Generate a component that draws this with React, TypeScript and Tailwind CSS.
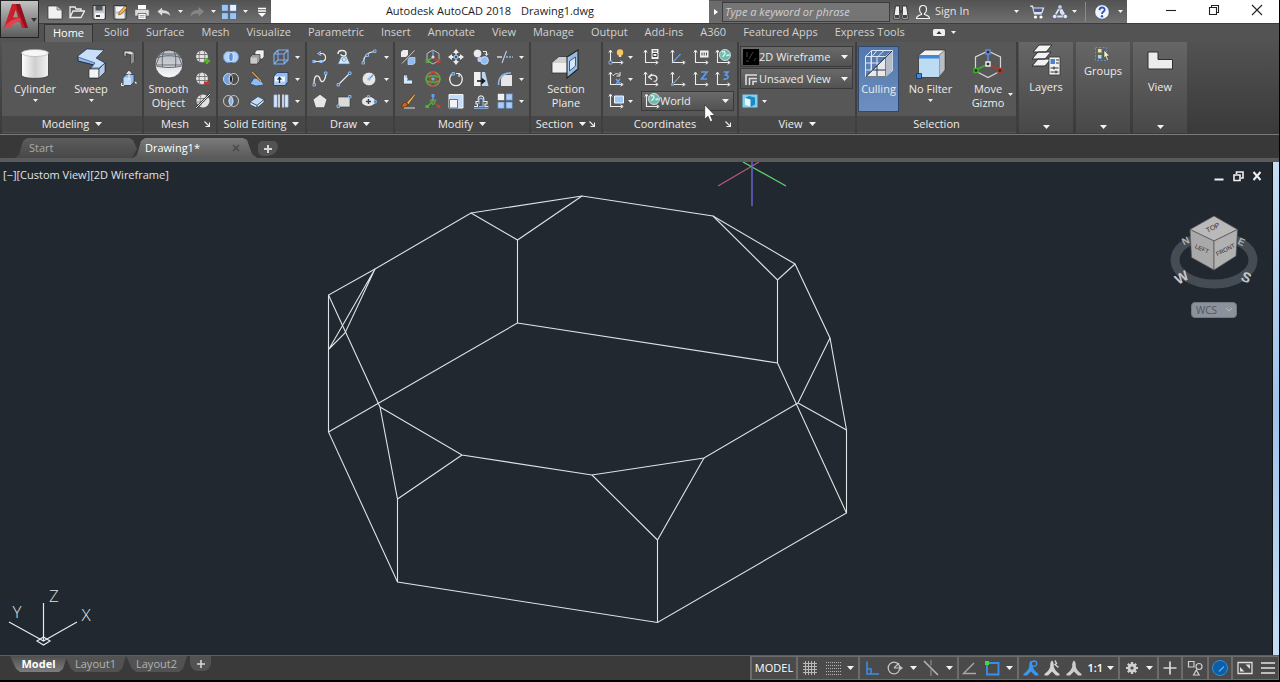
import React from "react";

type Kids = { children?: React.ReactNode };

const W = "#ececec";
const B = "#8fbcf2";
const L = "#c3dcf7";
const D = "#2c2c2c";

/* ---------- small 16px glyphs ---------- */

const sphere = (
  <>
    <circle cx="7" cy="7.500" r="6.300" fill="#e2e2e2" stroke="#3b3b3b" strokeWidth=".6" />
    <path d="M1.400 5.500h11.200M1.200 9.500h11.600M5 1.800C3.800 5 3.800 10 5 13.200M9 1.800c1.200 3.200 1.200 8.200 0 11.400" stroke="#666" strokeWidth=".8" fill="none" />
  </>
);
const axes = (
  <>
    <path d="M2.500 2v11.500H14" stroke={W} strokeWidth="1.100" fill="none" />
    <path d="M.8 3.600 2.500 1l1.700 2.600M12.600 11.800l2.600 1.700-2.600 1.700" stroke={W} strokeWidth="1" fill="none" />
  </>
);
const globe = (
  <>
    <circle cx="10" cy="6" r="5.500" fill="#6fb9ae" stroke="#e6f3ef" strokeWidth=".8" />
    <path d="M7 3c2-1 3 0 3 1.500S8 6 8 8M11.500 7c1-1 2.500-1 3-.5" stroke="#d9f5e6" strokeWidth="1.400" fill="none" />
  </>
);
const person = "M8 .5c1.800 1.700 2 4 1.700 6 1 3.500 2.800 5 5.800 7.500v1.500H12L8 11.500 4 15.500H.5V14c3-2.500 4.800-4 5.800-7.500C6 4.500 6.200 2.200 8 .5z";

const glyphs: Record<string, React.ReactNode> = {
  new: <><path d="M1 2h9l5 4v9H1z" fill="#f1f1f1" stroke="#333" strokeWidth=".7" /><path d="M10 2v4h5z" fill="#bdbdbd" stroke="#555" strokeWidth=".6" /></>,
  open: <path d="M1 13V3h5l1 2h5v2h3.500L12 13.500H1L4 7h8" fill="#5c5c5c" stroke={W} strokeWidth="1.300" />,
  save: <><path d="M2 1.500h12.500V15H2z" fill="#c3c7cc" stroke="#222" strokeWidth=".8" /><path d="M4.500 2h7v4.500h-7z" fill="#4f545b" /><path d="M4 9h9v6H4z" fill="#f3f3f3" /><path d="M5 11h4v2H5z" fill="#444" /></>,
  saveas: <><path d="M2 1.500h12V15H2z" fill="#b9bec4" stroke="#222" strokeWidth=".8" /><path d="M4 3h8v4.500H4z" fill="#f6f6f6" /><path d="M4 9.500h8v5H4z" fill="#eee" /><path d="m6.500 11 1-3L13 2l2 1.800L9.500 10z" fill="#efb44b" stroke="#6b4310" strokeWidth=".6" /></>,
  print: <><path d="M4 1h8v5H4z" fill="#fff" /><path d="M.8 5.500h14.400v6.500H.800z" fill="#dcdcdc" stroke="#444" strokeWidth=".5" /><path d="M4 9.500h8V15.500H4z" fill="#fff" stroke="#444" strokeWidth=".7" /><path d="M5.500 11.500h5M5.500 13.200h5" stroke="#888" strokeWidth=".8" /></>,
  undo: <path d="M1 7.500 6.500 3v3c5 0 8 2 8 7-1.500-2.800-4-3.500-8-3.500v3z" fill="#dadada" stroke="#444" strokeWidth=".5" />,
  redo: <path d="M15 7.500 9.500 3v3c-5 0-8 2-8 7 1.500-2.800 4-3.500 8-3.500v3z" fill="#868686" />,
  work: <><path d="M.5.500h6.800v6.800H.500zM8.700 8.700h6.800v6.800H8.700zM.5 8.700h6.800v6.800H.500z" fill="#9dc3ee" stroke="#31527a" strokeWidth=".6" /><path d="M8.700.500h6.800v6.800H8.700z" fill="#e9f2fc" stroke="#31527a" strokeWidth=".6" /></>,
  custom: <><path d="M4 4.500h8M4 7h8" stroke="#fff" strokeWidth="1.400" /><path d="M4 9h8l-4 4z" fill="#fff" /></>,
  bino: <><path d="M2.500 2h4v4l.5 9H.8L1.500 8zM9.500 2h4l1 6 .7 7H9L9.500 6z" fill="#eee" stroke="#222" strokeWidth=".8" /><path d="M6.500 6h3v3h-3zM2 11h4v3H2zM10 11h4v3h-4z" fill="#444" /></>,
  user: <path d="M8 1.500c2.200 0 3.500 1.700 3.500 3.700S10.300 9 9.500 9.500v1c2 .7 5 1.300 5 4h-13c0-2.700 3-3.300 5-4v-1C5.700 9 4.500 7.200 4.500 5.200S5.800 1.500 8 1.500z" fill="#555" stroke="#f4f4f4" strokeWidth="1.200" />,
  cart: <><path d="M1 2h2.500L5.500 10H13M4 4h10.500L13 8.500H5" fill="#cfd6ee" stroke="#dfe5f7" strokeWidth="1.200" /><path d="M4.500 4.500h9L12.500 8h-7z" fill="#4d5a86" /><circle cx="6.500" cy="13" r="1.600" fill="#fff" /><circle cx="12" cy="13" r="1.600" fill="#fff" /></>,
  a360: <><path d="M8 3 2.500 12.500h11zM8 3l1 6 4.500 3.500" fill="none" stroke="#dbe4f8" strokeWidth="1.800" /><circle cx="8" cy="3" r="2.300" fill="#c0cde8" stroke="#33415f" strokeWidth=".6" /><circle cx="2.700" cy="12.500" r="2.300" fill="#dbe4f8" stroke="#33415f" strokeWidth=".6" /><circle cx="13.300" cy="12.500" r="2.300" fill="#dbe4f8" stroke="#33415f" strokeWidth=".6" /></>,
  help: <><circle cx="8" cy="8" r="7.200" fill="#f2f5fb" stroke="#39496b" strokeWidth=".6" /><path d="M5.500 6.200c0-3.600 5.200-3.400 5.200-.5C10.700 7.500 8 7.600 8 10" stroke="#2b58b8" strokeWidth="1.800" fill="none" /><circle cx="8" cy="12.300" r="1.200" fill="#2b58b8" /></>,

  polysolid: <><path d="M3 2h7l3 2v9l-3 2V6L5 4.500V8L3 7z" fill="#dcdcdc" stroke="#333" strokeWidth=".8" /><path d="M10 5.500 13 4v9l-3 2z" fill="#8d8d8d" /></>,
  presspull: <><path d="m2.500 6 3-2.500H13V11l-3 3H2.500z" fill={B} stroke="#1c3350" strokeWidth=".7" /><path d="M2.500 6.500H10V14H2.500z" fill={L} /><path d="M8 9V1M5.800 3 8 .500 10.200 3M1 12l-1 2.500h3M14 11l1.500 1.500" stroke={W} strokeWidth="1.200" fill="none" /></>,
  meshmore: <>{sphere}<path d="M9 12h6M12 9v6" stroke="#57b02c" strokeWidth="2.400" /></>,
  meshless: <>{sphere}<path d="M9 12h6" stroke="#c8352d" strokeWidth="2.800" /></>,
  meshref: <><circle cx="8" cy="8" r="6.500" fill="#e2e2e2" /><path d="M2.500 5.500h7M2 9h5M6 2c-1 3-1 8 0 11" stroke="#777" strokeWidth=".8" fill="none" /><path d="M1 15 15 1" stroke="#333" strokeWidth="2.200" /><path d="M1 15 15 1" stroke="#ddd" strokeWidth="1" /></>,
  union: <><ellipse cx="5.300" cy="8" rx="4.800" ry="5.500" fill="#b5d2f6" stroke="#6d9fe0" strokeWidth=".9" /><ellipse cx="10.700" cy="8" rx="4.800" ry="5.500" fill="#b5d2f6" stroke="#6d9fe0" strokeWidth=".9" /><ellipse cx="8" cy="8" rx="2.300" ry="4.500" fill="#5d90d4" stroke="#f0f6fd" strokeWidth=".8" /></>,
  subtract: <><ellipse cx="5.300" cy="8" rx="4.800" ry="5.500" fill="#6f9fdd" stroke={L} /><ellipse cx="10.700" cy="8" rx="4.800" ry="5.500" fill="#4b4b4b" stroke="#cfcfcf" /><path d="M8 3.500c-2 2.500-2 6.500 0 9 2-2.500 2-6.500 0-9z" fill="#1c1c1c" stroke={W} strokeWidth=".7" /></>,
  intersect: <><ellipse cx="5.300" cy="8" rx="4.800" ry="5.500" fill="none" stroke="#c9c9c9" /><ellipse cx="10.700" cy="8" rx="4.800" ry="5.500" fill="none" stroke="#c9c9c9" /><path d="M8 3.500c-2.300 2.500-2.300 6.500 0 9 2.300-2.500 2.300-6.500 0-9z" fill="#7db4f0" stroke="#dcecfc" strokeWidth=".7" /></>,
  extrude: <><path d="M6 3 8 1h7v7l-2 2H6z" fill="#f0f0f0" stroke="#333" strokeWidth=".6" /><path d="m1 8 2.500-2.500H11V12l-3 3H1z" fill="#9c9c9c" stroke="#333" strokeWidth=".7" /><path d="M1.500 8.500H8v6H1.500z" fill="#c9c9c9" /></>,
  slice: <><path d="m1 13 4-6 6 1 4 6-8 1z" fill={B} stroke="#26405f" strokeWidth=".7" /><path d="m3 1 9 9" stroke="#3a2a1b" strokeWidth="2.400" /><path d="m3 1 9 9" stroke="#e2a15c" strokeWidth="1.300" /></>,
  thicken: <><path d="m1 9 8-5.500 6 3-7 6z" fill={L} stroke="#26405f" strokeWidth=".7" /><path d="m1 9 7 3.500V15L1 11.500zM8 12.500l7-6V9l-7 6z" fill="#e9eef5" stroke="#26405f" strokeWidth=".7" /></>,
  edges: <path d="M1 5h10v10H1zM5 1h10v10H5zM1 5l4-4M11 5l4-4M1 15l4-4M11 15l4-4" fill="none" stroke="#7eaef0" strokeWidth="1.100" />,
  faces: <><path d="m1 5 3-3.500h11v9l-3 4H1z" fill={B} stroke="#1f3553" strokeWidth=".8" /><path d="M1.500 5.500h10.500V14H1.500z" fill="#eef4fb" /><path d="M1.500 10.500h10.500V14H1.500z" fill="#a9cbf3" /><path d="M6.500 12V7M4.600 8.700l1.900-2.200 1.900 2.200" stroke="#1d2d44" strokeWidth="1.300" fill="none" /></>,
  separate: <><path d="M1 2h3v12H1zM12 2h3v12h-3z" fill="#d9e8fa" stroke="#9fc6f5" strokeWidth=".8" /><path d="M6 1.500v13M10 1.500v13" stroke="#f1f6fc" strokeWidth="1.500" /></>,

  pline: <><path d="M2 12.500h7c6 0 6-8 .5-8H8" stroke={W} strokeWidth="1.200" fill="none" /><path d="m9 2.500-3 2 3 2M1 11.500h2v2H1zM8 11.500h2v2H8z" stroke={B} strokeWidth="1.200" fill="none" /></>,
  region: <><path d="m5 8 5.500-1L14 15H2z" fill="#dcebfb" stroke="#49729f" strokeWidth=".7" /><path d="M2 5c0-5 8-4.500 8-.5S6 7 4.500 5.500M6 11c0-3 4-3 4-.5S7 13 6 11z" fill="none" stroke={W} strokeWidth="1.500" /><path d="M6 11c0-3 4-3 4-.5S7 13 6 11z" fill="none" stroke="#5b93d8" /></>,
  arc: <><path d="M2.500 13C3 7 7 3 13.500 2.500" stroke={W} strokeWidth="1.200" fill="none" /><path d="M1 12.500h2.500V15H1zM5 5h2.500v2.500H5zM12.500 1H15v2.500h-2.500z" stroke={B} fill="#4b6c96" strokeWidth=".9" /></>,
  spline: <><path d="M2 13C2 2 7 4 8 8s5 4 6-5.500" stroke={W} strokeWidth="1.300" fill="none" /><path d="M1 12.500h2.500V15H1zM12.500 1H15v2.500h-2.500z" stroke={B} fill="#4b6c96" strokeWidth=".9" /></>,
  line: <><path d="M2.500 13.500 13.500 2.500" stroke={W} strokeWidth="1.100" /><path d="M1 12.500h2.500V15H1zM12.500 1H15v2.500h-2.500z" stroke={B} fill="#4b6c96" strokeWidth=".9" /></>,
  circle: <><circle cx="8" cy="8" r="6.800" fill="#e6e6e6" stroke="#444" strokeWidth=".6" /><path d="m8 8 4-4" stroke="#5b93d8" strokeWidth="1.200" /><circle cx="8" cy="8" r="1.600" fill={B} /></>,
  polygon: <path d="m8 1.200 7 5.200-2.600 8.300H3.600L1 6.400z" fill="#e6e6e6" stroke="#3a3a3a" strokeWidth=".7" />,
  rect: <><path d="M2 4h12v10H2z" fill="#dadada" stroke="#333" strokeWidth=".6" /><path d="M1 12h2.500v2.500H1zM12.500 2.500H15V5h-2.500z" stroke={B} fill="#4b6c96" strokeWidth=".9" /></>,
  ellipse: <><ellipse cx="7.500" cy="8.500" rx="7" ry="5" fill="#e6e6e6" stroke="#333" strokeWidth=".6" /><path d="M7.500 6v5M5 8.500h5" stroke="#345" strokeWidth="1.400" /><path d="M13 7.500h2.300V10H13zM6.500 2.500h2v2h-2z" stroke={B} fill="#4b6c96" strokeWidth=".8" /></>,

  erase: <><path d="M1 3 3 1h5v5L6 8H1z" fill={W} /><path d="m8 10.500 1.500-2H15V14l-2 1.500H8z" fill={B} stroke={L} strokeWidth=".7" /><path d="M2 14.500 14.500 1.500" stroke="#c9c9c9" strokeWidth="1" /></>,
  gizmo: <><path d="M8 1 14 4.500v7L8 15 2 11.500v-7z" fill="none" stroke="#bdbdbd" /><path d="M8 8V2" stroke="#6c9be0" strokeWidth="1.400" /><path d="m8 8-5.500 4" stroke="#4db536" strokeWidth="1.400" /><path d="m8 8 5.500 4" stroke="#cf3d34" strokeWidth="1.400" /><path d="M1 10.500h3v3H1z" fill="none" stroke="#4db536" /><path d="M12 10.500h3v3h-3z" fill="none" stroke="#cf3d34" /><circle cx="8" cy="8" r="1.500" fill="#ddd" /></>,
  move: <><path d="m8 0 3 4H5zM8 16l3-4H5zM0 8l4-3v6zM16 8l-4-3v6z" fill={W} /><path d="M8 3v2.500M8 10.500V13M3 8h2.500M10.500 8H13" stroke={W} strokeWidth="1.800" /><path d="M6.500 6.500h3v3h-3z" fill="#31527a" stroke={B} /></>,
  copy: <><circle cx="4.500" cy="4.500" r="4.200" fill={W} stroke="#333" strokeWidth=".5" /><circle cx="7" cy="10.500" r="2.600" fill="#b9cfe9" /><circle cx="11.500" cy="11.500" r="3.900" fill={B} stroke={L} /><path d="M10 2.500h3.500V6M12 4.500l1.500 2 1.500-2" stroke={W} fill="none" /></>,
  trim: <><path d="M0 8h5" stroke={W} strokeWidth="1.300" /><path d="M9 8h7" stroke={B} strokeWidth="1.300" strokeDasharray="2 1" /><path d="M5 14 9.500 2" stroke="#b8cbe2" strokeWidth="1.200" /></>,
  align: <><path d="M3.500 4h4v5.500h5V13h-9z" fill="#dbe9f8" stroke="#333" strokeWidth=".6" /><path d="m4 4 3.500 3v2.500H12" stroke="#82aedc" fill="none" /></>,
  rot3d: <><circle cx="8" cy="8" r="7" fill="none" stroke="#8a8f5a" strokeWidth="1.400" /><ellipse cx="8" cy="8" rx="3.300" ry="7" fill="none" stroke="#c5453b" strokeWidth="1.500" /><ellipse cx="8" cy="8" rx="7" ry="3.300" fill="none" stroke="#4db536" strokeWidth="1.400" /><path d="M6.500 6.500h3v3h-3z" fill="#7aa7e4" /></>,
  rotate: <><path d="M5 2.500C-.5 6 1.500 14.700 8 14.700S16.500 6 11 2.500" stroke={W} strokeWidth="1.300" fill="none" /><path d="M8 2.500h3v3.500" stroke={W} strokeWidth="1.200" fill="none" /><path d="M4 1.500h2.500V4H4z" stroke={B} strokeWidth=".9" fill="#4b6c96" /></>,
  mirror: <><path d="M1 1h6.500v14H1z" fill="#f1f1f1" /><path d="M9 1h3l3.500 14H9z" fill="#b8d4f3" /><path d="M4 10h6M8.500 7.500l3 2.500-3 2.500" stroke="#111" strokeWidth="1.600" fill="none" /></>,
  fillet: <><path d="M4 15V9c0-3 2-5 5-5h6v11z" fill="#e6e6e6" /><path d="M1.500 14C1.500 6 5 2 14 2" stroke={B} strokeWidth="1.500" fill="none" /></>,
  explode: <><path d="m6.500 10 8-9 1 1-7 9.500z" fill="#f0b85a" stroke="#4b2c0b" strokeWidth=".6" /><path d="M1 14c1.500-1 1-4 4-5l3 2.500C6.500 14.500 3 14.500 1 14z" fill="#c9651d" stroke="#43200a" strokeWidth=".6" /><path d="M4 15h11" stroke="#ddd" /></>,
  scale3d: <><path d="M8 8V2" stroke="#6c9be0" strokeWidth="1.500" /><path d="m8 8.500-6 5" stroke="#4db536" strokeWidth="1.500" /><path d="m8 8.500 6 5" stroke="#cf3d34" strokeWidth="1.500" /><path d="M6.500 1h3v3h-3z" fill="#6c9be0" /><path d="M.5 12H4v3H.500z" fill="#4db536" /><path d="M12 12h3.500v3H12z" fill="#cf3d34" /><path d="m5 7 3 5 3-5z" fill="none" stroke="#5eb048" /></>,
  scale: <><path d="M1 1.500h14V15H1z" fill={L} stroke="#f2f6fb" strokeWidth="1" /><path d="M1.500 6.500h8V15h-8z" fill="#f3f3f3" stroke="#44699a" strokeWidth=".9" /></>,
  offset: <><path d="M1 13.500h3.500V11H3V8.500h2.500C3 1 13 1 10.500 8.500H14V11h-2v2.500h3.500" stroke={W} strokeWidth="1.100" fill="none" /><path d="M1 15.300h14.500M6 13.500h4V8c1-3.500-5-3.500-4 0v3" stroke={B} strokeWidth="1.100" fill="none" /></>,
  array: <><path d="M.8.800h6.400v6.400H.800z" fill="#f1f1f1" /><path d="M9 .800h6.400v6.400H9zM.8 9h6.400v6.400H.800zM9 9h6.400v6.400H9z" fill="#a9cbf5" stroke="#4b75a8" strokeWidth=".6" /></>,

  ucs: <>{axes}<circle cx="12" cy="3.500" r="3.200" fill="#f7c75b" /><path d="M10.800 6h2.400v2h-2.400z" fill="#ddd" /><path d="M1 12h3v3H1z" fill="#2d568e" stroke={B} strokeWidth=".8" /></>,
  named: <>{axes}<path d="M8.500 0h7v10h-7z" fill="#efefef" /><path d="M10 2h4M10 4.500h4v3h-4z" stroke="#333" strokeWidth="1" fill="none" /></>,
  ucsface: <>{axes}<path d="m3 13 7.500-8" stroke="#5f9be8" strokeWidth="1.300" /></>,
  ucsobj: <>{axes}<path d="M7 1.500h8.500v7H7z" fill="#f2f2f2" /><path d="M9 3.500v3M11.200 3.500v3M13.400 3.500v3" stroke="#444" strokeWidth="1" /></>,
  ucsworld: <>{axes}{globe}</>,
  ucsx: <>{axes}<path d="M5 5c2-3 5-3 6.500-1M12 1v4H8.500" stroke={W} fill="none" /><path d="m8 8 4 5M12 8l-4 5" stroke="#6ba3ec" strokeWidth="1.500" /></>,
  ucsprev: <>{axes}<path d="M6 6c3-3 8-2 8 1.500 0 2-1.500 3-3.500 3M9 3 5.500 6 9 8.500" stroke={W} strokeWidth="1.200" fill="none" /></>,
  ucsorig: <>{axes}<path d="m3 13 7-8" stroke="#a8b8cc" /><path d="M1 12h3v3H1z" fill="#5c98e2" /></>,
  ucsz: <>{axes}<path d="M8 1h6L8.500 8H14" stroke="#5f9be8" strokeWidth="1.700" fill="none" /></>,
  ucs3: <>{axes}<path d="M8.500 1h4.500l-2.500 3c4 0 3.500 5-2 4" stroke="#5f9be8" strokeWidth="1.700" fill="none" /></>,
  ucsview: <>{axes}<path d="M6.500 3h9v7h-9z" fill="#9cc6f5" stroke="#eef5fd" /></>,
  cubeview: <><path d="M.5 1.500h15v13H.500z" fill="#7ed0f2" /><path d="m3 5 4-2 6 1.500v7L8.500 14 3 12z" fill="#1f88c4" /><path d="m3 5 5.500 1.500V14L3 12z" fill="#e9f7fd" /></>,

  ortho: <path d="M3 1.500V14h12M3 9h4v5" stroke="#3b8fe8" strokeWidth="1.500" fill="none" />,
  polar: <><circle cx="7" cy="8" r="5.800" fill="none" stroke="#c4c4c4" strokeWidth="1.300" /><path d="M7 8h8M7 8l5-5M13 6.500 15 8l-2 1.500" stroke="#c4c4c4" strokeWidth="1.200" fill="none" /></>,
  iso: <><path d="M1 1 15 15" stroke="#b9b9b9" strokeWidth="1.500" /><path d="M8 0v5.500M8 9.500V16" stroke="#8b8b8b" strokeWidth="1.200" /></>,
  angle: <path d="M13 3 2.500 13.500H15" stroke="#a9a9a9" strokeWidth="1.400" fill="none" />,
  osnap: <><path d="M3 3h11.500v11.500H3z" fill="none" stroke="#3b8fe8" strokeWidth="1.800" /><path d="M1 1h4v4H1z" fill="#38e038" /></>,
  grid: <path d="M3.500 1v14M6.500 1v14M9.500 1v14M12.500 1v14M1 3.500h14M1 6.500h14M1 9.500h14M1 12.500h14" stroke="#b9b9b9" strokeWidth="1" />,
  dots: <path d="M1 2.500h15M1 5.500h15M1 8.500h15M1 11.500h15M1 14.500h15" stroke="#b5b5b5" strokeWidth="1" strokeDasharray="1 1" />,
  anno: <><path d={person} fill="#3b96f0" /><circle cx="11" cy="3.700" r="2.700" fill="#4a4a4a" stroke="#3b96f0" strokeWidth="1.400" /></>,
  anno2: <><path d={person} fill="#d4d4d4" /><path d="m11 .500 1.500 3L11 4.500l3.500 3" stroke="#d4d4d4" strokeWidth="1.400" fill="none" /></>,
  anno3: <path d={person} fill="#cccccc" />,
  gear: <><circle cx="8" cy="8" r="4.500" fill="#d0d0d0" /><path d="M8 2v12M2 8h12M3.800 3.800l8.400 8.400M12.200 3.800l-8.400 8.400" stroke="#d0d0d0" strokeWidth="2.200" /><circle cx="8" cy="8" r="1.600" fill="#4a4a4a" /></>,
  plus: <path d="M8 1.500v13M1.500 8h13" stroke="#d8d8d8" strokeWidth="1.700" />,
  shapes: <><path d="M1.500 1.500h5.500V7H1.500zM6.500 15l2.800-5 2.800 5z" fill="none" stroke="#cfcfcf" strokeWidth="1.200" /><circle cx="12" cy="6.500" r="3" fill="none" stroke="#cfcfcf" strokeWidth="1.200" /></>,
  hw: <><circle cx="8" cy="8" r="7.500" fill="#0d5ea8" stroke="#2f8ee0" strokeWidth="1" /><path d="m7 11.500 5-5" stroke="#59aef2" strokeWidth="1.300" /></>,
  clean: <><path d="M1 2.500h14v11H1z" fill="none" stroke="#dedede" strokeWidth="1.300" /><path d="M8.500 4.500H13V9zM3 7v4.500h4.500z" fill="#dedede" /></>,
  burger: <path d="M1 3h14M1 8h14M1 13h14" stroke="#e2e2e2" strokeWidth="1.600" />,
};

const Glyph = ({ name }: { name: string }) => (
  <svg viewBox="0 0 16 16" className="h-4 w-4 shrink-0" aria-hidden="true">{glyphs[name]}</svg>
);

const Tri = () => (
  <svg viewBox="0 0 5 3" className="h-[3px] w-[5px] shrink-0" aria-hidden="true"><path d="M0 0h5L2.500 3z" fill="#f0f0f0" /></svg>
);
const BigTri = () => (
  <svg viewBox="0 0 7 4" className="h-1 w-[7px] shrink-0" aria-hidden="true"><path d="M0 0h7L3.500 4z" fill="#f4f4f4" /></svg>
);

const IconBtn = ({ name }: { name: string }) => (
  <button aria-label={name} className="flex h-[22px] items-center justify-center">
    <Glyph name={name} />
  </button>
);
const MoreBtn = () => (
  <button aria-label="More" className="flex h-[22px] items-center justify-center"><Tri /></button>
);
const ToolGrid = ({ rows, cols }: { rows: string[]; cols: string }) => (
  <div className={`grid content-start pt-1 ${cols}`}>
    {rows.map((n, i) => (n === "v" ? <MoreBtn key={i} /> : <IconBtn key={i} name={n} />))}
  </div>
);

/* ---------- 32px drawings ---------- */

const big: Record<string, React.ReactNode> = {
  cylinder: <><path d="M2.500 5v22c0 4.500 27 4.500 27 0V5z" fill="url(#cyl)" stroke="#333" strokeWidth=".8" /><ellipse cx="16" cy="5" rx="13.500" ry="3.500" fill="#f7f7f7" stroke="#aaa" strokeWidth=".6" /></>,
  sweep: <><path d="m3 8 9-7 17 1-8 8 9 5v9l-6 6h-9v-9l4-4L3 13z" fill="#8db7ea" stroke="#1d2c40" /><path d="m3 8 9-7 17 1-8 8 9 5-6 5h-8l4-5L3 9z" fill="#c9def7" stroke="#2d486b" strokeWidth=".7" /><path d="M14 21h10v9H14z" fill="#f3f3f3" stroke="#333" strokeWidth=".7" /><path d="m24 21 6-6v9l-6 6z" fill="#b5cdea" stroke="#333" strokeWidth=".7" /></>,
  smooth: <><circle cx="16" cy="16" r="14" fill="url(#ball)" stroke="#333" strokeWidth=".8" /><path d="M7 6h18l4 11H3zM3 10c8-3 18-3 26 0M3.500 18c8 2 17 2 25 0M11 3c-2 4-2 9-1.500 16M21 3c2 4 2 9 1.500 16" fill="#9aa3ae" fillOpacity=".25" stroke="#5c6167" strokeWidth=".9" /></>,
  section: <><path d="m2 15 7-6h11v15l-2 1H2z" fill="#f0f0f0" stroke="#333" strokeWidth=".8" /><path d="m2 15 7-6h11l-4 6z" fill="#d0d0d0" /><path d="M17 9 28 2v19l-11 9z" fill="#9fc5f1" fillOpacity=".9" stroke="#222" strokeWidth="1.100" /><path d="m19.500 13 6-4v9l-6 5z" fill="#d4e6fa" stroke="#335c92" /></>,
  culling: <><path d="M2.500 8.500h20v20h-20zM8 8.500v20M14 8.500v20M2.500 15h20M2.500 22h20M8.500 2.500h21v20M2.500 8.500l6-6M22.500 8.500l7-6M22.500 28.500l7-6M14 2.500l-5 6M21 2.500l-6 6M8.500 2.500v20h21" fill="none" stroke="#dbe7f6" strokeWidth="1" /><path d="M3 28.500 22.500 9v19.500z" fill="#e9e9e9" stroke="#333" strokeWidth=".6" /><path d="M23 9l6.500-6v19L23 28.500z" fill="#b3bcc8" /><path d="M3 28.500 29 3M14 18v10M10 22h12.500" stroke="#24364e" strokeWidth="1" fill="none" /></>,
  nofilter: <><path d="m4 7 6-5h20v20l-6 7H4z" fill="#f2f2f2" stroke="#333" strokeWidth=".8" /><path d="m24 7 6-5v20l-6 7z" fill="#b9bec4" stroke="#444" strokeWidth=".6" /><path d="M4 7h20v22H4z" fill="#bcdcf4" /><path d="M4 7h20v3.500H4z" fill="#3f86dd" /><path d="M1.500 25.500h5v5h-5z" fill="#3f86dd" stroke="#12315c" strokeWidth=".8" /></>,
  movegizmo: <><path d="M16 3 28.500 9v14L16 29.500 3.500 23V9z" fill="none" stroke="#d6d6d6" strokeWidth="1.200" /><path d="M16 16V5" stroke="#5e8fdc" strokeWidth="1.600" /><path d="M16 16 4 22" stroke="#3fae2d" strokeWidth="1.600" /><path d="m16 16 12 6" stroke="#a93a31" strokeWidth="1.600" /><path d="M14 2h4v4h-4z" fill={D} stroke="#5e8fdc" strokeWidth="1.400" /><path d="M2 20.500h4v4H2z" fill={D} stroke="#3fae2d" strokeWidth="1.400" /><path d="M26 20.500h4v4h-4z" fill={D} stroke="#a93a31" strokeWidth="1.400" /><path d="M14 14h4v4h-4z" fill={D} stroke="#eee" strokeWidth="1.400" /></>,
  layers: <><path d="m2 22 6-7h13l-6 7zM2 15l6-7h13l-6 7zM3 8l6-7h13l-6 7z" fill="#f3f3f3" stroke="#2e2e2e" /><path d="M19 13h11v18H19z" fill="#f0f0f0" stroke="#333" strokeWidth=".8" /><path d="M20.500 15h4.500v5h-4.500z" fill="#4c83cc" /><path d="M26 16h3M26 19h3M20.500 24h8M20.500 28h8M24 22.500v3M26 26.500v3" stroke="#333" strokeWidth="1.100" /></>,
  viewp: <path d="M4 8h10v7.500h14.500V25H4z" fill="#ececec" stroke="#2e2e2e" strokeWidth="1" />,
};
const Big = ({ name }: { name: string }) => (
  <svg viewBox="0 0 32 32" className="h-8 w-8 shrink-0" aria-hidden="true">
    <defs>
      <linearGradient id="cyl"><stop offset="0" stopColor="#fff" /><stop offset=".5" stopColor="#cfcfcf" /><stop offset="1" stopColor="#f2f2f2" /></linearGradient>
      <linearGradient id="ball" x2="0" y2="1"><stop offset="0" stopColor="#b9bec5" /><stop offset="1" stopColor="#fafafa" /></linearGradient>
    </defs>
    {big[name]}
  </svg>
);

const BigBtn = ({ icon, label, second, arrow, className = "" }: { icon: string; label: string; second?: string; arrow?: boolean; className?: string }) => (
  <button className={`flex shrink-0 flex-col items-center whitespace-nowrap leading-[14px] ${className}`}>
    <Big name={icon} />
    <span className="mt-0.5">{label}</span>
    {second && <span>{second}</span>}
    {arrow && <span className="mt-[3px] flex"><Tri /></span>}
  </button>
);

const Panel = ({ title, className, arrow, corner, children }: Kids & { title: string; className: string; arrow?: boolean; corner?: boolean }) => (
  <section className={`flex shrink-0 flex-col border-r-2 border-[#3f3f3f] bg-[#575757] ${className}`}>
    <div className="h-[74px]">{children}</div>
    <div className="flex h-4 items-center bg-[#474747] px-0.5">
      <span className="flex flex-1 items-center justify-center gap-1.5 whitespace-nowrap">
        {title}
        {arrow && <BigTri />}
      </span>
      {corner && (
        <svg viewBox="0 0 6 6" className="mr-1 h-1.5 w-1.5 shrink-0" aria-hidden="true"><path d="M.5.500 5 5M5.500 1.500v4h-4" stroke="#eee" strokeWidth="1.100" fill="none" /></svg>
      )}
    </div>
  </section>
);

const Collapsed = ({ label, children }: Kids & { label: string }) => (
  <button className="mr-[3px] flex w-[54px] shrink-0 flex-col items-center justify-between bg-gradient-to-b from-[#666] to-[#484848] pb-1">
    <span className="flex flex-col items-center">{children}<span className="leading-[14px]">{label}</span></span>
    <BigTri />
  </button>
);

const Combo = ({ icon, value, label, className }: { icon: React.ReactNode; value: string; label: string; className: string }) => (
  <label className={`flex items-center border border-[#3a3a3a] bg-gradient-to-b from-[#6a6a6a] to-[#525252] pl-0.5 pr-1 ${className}`}>
    {icon}
    <select aria-label={label} className="min-w-0 flex-1 appearance-none bg-transparent leading-4 outline-none">
      <option>{value}</option>
    </select>
    <BigTri />
  </label>
);

const ribbonTabs = ["Solid", "Surface", "Mesh", "Visualize", "Parametric", "Insert", "Annotate", "View", "Manage", "Output", "Add-ins", "A360", "Featured Apps", "Express Tools"];

const Header = () => (
  <header className="flex h-[42px] bg-[#535353]">
    <button aria-label="Application menu" className="flex h-[38px] w-[39px] shrink-0 items-start gap-[3px] border border-[#222] bg-gradient-to-b from-[#c4c4c4] to-[#5c5c5c] pl-[3px] pt-px">
      <svg viewBox="0 0 24 28" className="h-7 w-6 shrink-0" aria-hidden="true">
        <path d="M0 26 8 2h8l8 24h-6l-2-6H8l-2 6zM9 15.500h5L11.800 8z" fill="#c8202c" />
        <path d="M12 2h4l8 24h-3L13 7z" fill="#8e1420" />
        <path d="M0 26c3-6 8-9 16-10l1 3.500c-6 0-9 2.500-11 6.500z" fill="#e4414a" />
      </svg>
      <span className="mt-4 flex"><svg viewBox="0 0 6 4" className="h-1 w-1.5"><path d="M0 0h6L3 4z" fill="#333" /></svg></span>
    </button>
    <div className="flex min-w-0 flex-1 flex-col">
      <div className="flex h-[23px]">
        <div className="flex w-[232px] shrink-0 items-center justify-between bg-gradient-to-b from-[#525252] to-[#707070] pl-2 pr-px">
          {["new", "open", "save", "saveas", "print", "undo"].map((n) => (
            <button key={n} aria-label={n}><Glyph name={n} /></button>
          ))}
          <Tri />
          <button aria-label="redo"><Glyph name="redo" /></button>
          <Tri />
          <button aria-label="workspace"><Glyph name="work" /></button>
          <Tri />
          <button aria-label="customize"><Glyph name="custom" /></button>
        </div>
        <h1 className="flex min-w-0 flex-1 items-center justify-center gap-2.5 whitespace-nowrap bg-white text-[11px] text-[#1c1c1c]">
          <span>Autodesk AutoCAD 2018</span>
          <span>Drawing1.dwg</span>
        </h1>
        <div className="flex w-[418px] shrink-0 items-center bg-gradient-to-b from-[#525252] to-[#707070]">
          <button aria-label="Toggle search" className="flex h-[21px] w-[13px] items-center justify-center bg-[#6b6b6b]">
            <svg viewBox="0 0 4 6" className="h-1.5 w-1"><path d="M0 0v6l4-3z" fill="#fff" /></svg>
          </button>
          <input aria-label="Search" placeholder="Type a keyword or phrase" className="h-5 w-[168px] border border-[#3c3c3c] bg-[#757575] px-0.5 italic text-white outline-none placeholder:text-[#d0d0d0]" />
          <button aria-label="Find" className="ml-[3px]"><Glyph name="bino" /></button>
          <button className="ml-1.5 flex flex-1 items-center gap-1 text-[#e4e4e4]"><Glyph name="user" />Sign In</button>
          <Tri />
          <button aria-label="Store" className="ml-2.5"><Glyph name="cart" /></button>
          <button aria-label="Autodesk A360" className="ml-[7px] flex items-center gap-1"><Glyph name="a360" /><Tri /></button>
          <span className="ml-2 h-5 w-px bg-[#8a8a8a]" />
          <button aria-label="Help" className="ml-2 mr-1 flex items-center gap-2"><Glyph name="help" /><Tri /></button>
        </div>
        <div className="grid w-[152px] shrink-0 grid-cols-3 bg-white pl-[22px]">
          {["M3 8.500h10", "M3.500 5.500h7v7h-7zM5.500 5.500v-2h7v7h-2", "m3 3 10 10M13 3 3 13"].map((d, i) => (
            <button key={d} aria-label={["Minimize", "Restore", "Close"][i]} className="flex items-center justify-center pb-1">
              <svg viewBox="0 0 16 16" className="h-4 w-4"><path d={d} fill="none" stroke="#222" strokeWidth="1.100" /></svg>
            </button>
          ))}
        </div>
      </div>
      <nav className="flex h-[19px] items-center border-t border-[#3d3d3d] bg-[#535353] pb-px pl-[5px] text-[#d2d2d2]">
        <button className="mr-0.5 h-[18px] w-[49px] border border-b-0 border-[#333] bg-[#646464] text-white">Home</button>
        {ribbonTabs.map((t) => (
          <button key={t} className="whitespace-nowrap pl-[9px] pr-2">{t}</button>
        ))}
        <button aria-label="Minimize ribbon" className="ml-5 flex items-center gap-1.5">
          <svg viewBox="0 0 12 7" className="h-[7px] w-3"><rect width="12" height="7" rx="1.500" fill="#eee" /><path d="m3.500 5 2.500-3 2.500 3z" fill="#333" /></svg>
          <Tri />
        </button>
      </nav>
    </div>
  </header>
);

const Ribbon = () => (
  <div className="relative flex h-[93px] border-b border-[#7a7a7a] bg-gradient-to-b from-[#525252] to-[#3a3a3a] pb-px pl-0.5 text-[#ececec]">
    <Panel title="Modeling" arrow className="w-[142px]">
      <div className="flex">
        <BigBtn icon="cylinder" label="Cylinder" arrow className="w-[66px] pt-1.5" />
        <BigBtn icon="sweep" label="Sweep" arrow className="w-[46px] pt-1.5" />
        <ToolGrid cols="grid-cols-[22px] pl-1" rows={["polysolid", "presspull"]} />
      </div>
    </Panel>
    <Panel title="Mesh" corner className="w-[74px]">
      <div className="flex">
        <BigBtn icon="smooth" label="Smooth" second="Object" className="w-[49px] pt-1.5" />
        <ToolGrid cols="grid-cols-[20px]" rows={["meshmore", "meshless", "meshref"]} />
      </div>
    </Panel>
    <Panel title="Solid Editing" arrow className="w-[89px]">
      <ToolGrid cols="grid-cols-[26px_26px_22px_10px]" rows={["union", "extrude", "edges", "v", "subtract", "slice", "faces", "v", "intersect", "thicken", "separate", "v"]} />
    </Panel>
    <Panel title="Draw" arrow className="w-[88px]">
      <ToolGrid cols="grid-cols-[26px_22px_28px_6px]" rows={["pline", "region", "arc", "v", "spline", "line", "circle", "v", "polygon", "rect", "ellipse", "v"]} />
    </Panel>
    <Panel title="Modify" arrow className="w-[136px]">
      <ToolGrid
        cols="grid-cols-[26px_24px_22px_28px_20px_12px]"
        rows={["erase", "gizmo", "move", "copy", "trim", "v", "align", "rot3d", "rotate", "mirror", "fillet", "v", "explode", "scale3d", "scale", "offset", "array", "v"]}
      />
    </Panel>
    <Panel title="Section" arrow corner className="w-[72px]">
      <BigBtn icon="section" label="Section" second="Plane" className="w-full pt-1.5" />
    </Panel>
    <Panel title="Coordinates" corner className="w-[136px]">
      <div className="grid grid-cols-[25px_5px_36px_18px_27px_18px] pt-1">
        {["ucs", "v", "named", "ucsface", "ucsobj", "ucsworld", "ucsx", "v", "ucsprev", "ucsorig", "ucsz", "ucs3", "ucsview", "v"].map((n, i) =>
          n === "v" ? <MoreBtn key={i} /> : <IconBtn key={i} name={n} />,
        )}
        <Combo className="col-span-4 -mr-0.5 ml-2 h-5 self-center" label="UCS" value="World" icon={<Glyph name="ucsworld" />} />
      </div>
    </Panel>
    <Panel title="View" arrow className="w-[118px]">
      <div className="flex flex-col gap-px pl-px pr-0.5 pt-1">
        <Combo className="h-[21px]" label="Visual style" value="2D Wireframe" icon={<svg viewBox="0 0 16 16" className="h-4 w-4"><path d="M0 0h16v16H0z" fill="#000" /><path d="M4 3v5M6 10l4-7M11 12l2-3M3 12h3" stroke="#555" strokeWidth=".8" /></svg>} />
        <Combo className="h-[21px]" label="Named view" value="Unsaved View" icon={<svg viewBox="0 0 16 16" className="h-4 w-4"><path d="M3 14V4h11M6.500 14V7.500h7.500M10 14v-3.500h4" stroke="#ddd" strokeWidth="1.600" fill="none" /></svg>} />
        <button aria-label="Viewports" className="flex h-[22px] items-center gap-1 self-start pl-0.5"><Glyph name="cubeview" /><Tri /></button>
      </div>
    </Panel>
    <Panel title="Selection" className="w-[161px]">
      <div className="flex pl-px pt-1">
        <BigBtn icon="culling" label="Culling" className="h-[66px] w-[41px] border border-[#30486b] bg-gradient-to-b from-[#5478ad] to-[#6d8fc0] pt-px" />
        <BigBtn icon="nofilter" label="No Filter" arrow className="w-[63px] pt-0.5" />
        <BigBtn icon="movegizmo" label="Move" second="Gizmo" className="w-[52px] pt-0.5" />
        <span className="-ml-1.5 self-end pb-4"><Tri /></span>
      </div>
    </Panel>
    <div className="flex min-w-0 flex-1 pl-px">
      <Collapsed label="Layers"><span className="pb-1 pt-0.5"><Big name="layers" /></span></Collapsed>
      <Collapsed label="Groups">
        <svg viewBox="0 0 16 16" className="mb-0.5 mt-1 h-4 w-4" aria-hidden="true">
          <path d="M.5 1.500h11v13H.500z" fill="none" stroke="#5c8fd0" strokeDasharray="2 1.500" /><path d="M3 3h3.500v3.500H3z" fill="#e6e68c" /><path d="M3 9h3.500v3.500H3z" fill="#a8d8f0" /><path d="m9 4 5.500 6h-2.500l1.500 4-1.500.500-1.500-4L9 12z" fill="#f4f4c0" stroke="#333" strokeWidth=".5" />
        </svg>
      </Collapsed>
      <Collapsed label="View"><span className="pb-1 pt-0.5"><Big name="viewp" /></span></Collapsed>
    </div>
    <svg viewBox="0 0 12 19" className="absolute left-[704px] top-[62px] h-[19px] w-3" aria-hidden="true">
      <path d="M.7.800v14.500l3.300-3 2.300 5.500 2.400-1L6.500 11.500H11z" fill="#fff" stroke="#333" strokeWidth=".8" />
    </svg>
  </div>
);

const DocTabs = () => (
  <div className="flex h-[27px] items-end border-b-4 border-[#5a5a5a] bg-[#383838] pl-[15px]">
    <button className="h-5 w-[122px] bg-gradient-to-b from-[#5c5c5c] to-[#484848] pl-[14px] text-left text-[#a9a9a9] [clip-path:polygon(0_100%,4px_85%,8px_15%,12px_0,114px_0,118px_10%,122px_55%,117px_100%)]">Start</button>
    <button className="-ml-1 flex h-5 w-[124px] items-center justify-between bg-gradient-to-b from-[#7b7b7b] to-[#5a5a5a] pl-3 pr-[17px] text-white [clip-path:polygon(0_100%,4px_85%,8px_15%,12px_0,110px_0,114px_10%,119px_80%,124px_100%)]">
      Drawing1*
      <svg viewBox="0 0 8 8" className="h-2 w-2"><path d="m1 1 6 6M7 1 1 7" stroke="#4a4a4a" strokeWidth="1.600" /></svg>
    </button>
    <button aria-label="New drawing" className="ml-px mb-0.5 flex h-[15px] w-5 items-center justify-center rounded-md rounded-br-xl bg-[#525252]">
      <svg viewBox="0 0 8 8" className="h-2 w-2"><path d="M4 0v8M0 4h8" stroke="#d6d6d6" strokeWidth="2" /></svg>
    </button>
  </div>
);

const edges = [
  "M471 213 582 196 713 216 795 264 830 338 846.500 430V513L657.500 622.500 397.500 582 328.500 432V295L375 269z",
  "M471 213 517.500 240 582 196M517.500 240V323L328.500 432M517.500 323 777.500 363 846.500 513M713 216 777.500 280 795 264M777.500 280V363",
  "M830 338 798 403 846.500 430M798 403 704 458 592 475 462 455 380 407M328.500 295 380 407 397.500 499 462 455M397.500 499V582",
  "M592 475 657.500 540 704 458M657.500 540V622M375 269 329 349 345 333z",
];

const Viewport = () => (
  <main className="flex min-h-0 flex-1 bg-[#212830]">
    <div className="relative min-w-0 flex-1 overflow-hidden">
      <svg viewBox="0 162 1272 493" className="h-full w-full" aria-label="Model">
        <g fill="none" stroke="#dfe3e6" strokeWidth="1.100">{edges.map((d) => <path key={d} d={d} />)}</g>
        <path d="m718 186 41-24" stroke="#b4577a" strokeWidth="1.300" />
        <path d="m743 162 43 24" stroke="#5fd068" strokeWidth="1.300" />
        <path d="M752 162v44" stroke="#6361c4" strokeWidth="1.600" />
      </svg>
      <div className="absolute left-[3px] top-[5px] whitespace-nowrap leading-4 text-[#e4e4e4]">[−][Custom View][2D Wireframe]</div>
      <div className="absolute right-[9px] top-2 flex gap-[7px]">
        {["M1.500 9.500h9", "M2 5h6v5.500H2zM4.500 4V2H11v6H9", "m2.500 2 7 8M9.500 2l-7 8"].map((d, i) => (
          <button key={d} aria-label={["Minimize view", "Restore view", "Close view"][i]}>
            <svg viewBox="0 0 12 12" className="h-3 w-3"><path d={d} fill="none" stroke="#f0f0f0" strokeWidth={i === 1 ? 1.6 : 2} /></svg>
          </button>
        ))}
      </div>
      <div className="absolute right-[13px] top-[52px] flex w-[90px] flex-col items-center">
        <svg viewBox="0 0 90 80" className="h-20 w-[90px]" aria-label="View cube" fontFamily="Liberation Sans, sans-serif" fontWeight="700" textAnchor="middle">
          <ellipse cx="45" cy="46" rx="39" ry="24" fill="none" stroke="#454c54" strokeWidth="9" />
          <g fill="#a9adb1">
            <text x="18" y="30" fontSize="10" transform="rotate(-25 18 30)">N</text>
            <text x="71" y="31" fontSize="10" transform="rotate(25 71 31)">E</text>
            <text x="14" y="68" fontSize="14" fill="#c5c8cb" transform="rotate(-30 14 66)">W</text>
            <text x="76" y="68" fontSize="14" fill="#c5c8cb" transform="rotate(25 76 66)">S</text>
          </g>
          <path d="m45 2 23.500 13.500L45 27 21 15.500z" fill="#b9b9b9" stroke="#555" strokeWidth=".7" />
          <path d="m21 15.500 24 11.500v29L22.500 43.500z" fill="#a9a9a9" stroke="#555" strokeWidth=".7" />
          <path d="m45 27 23.500-11.500L67 42 45 56z" fill="#b1b1b1" stroke="#555" strokeWidth=".7" />
          <g fill="#2f2f2f" fontSize="7" fontWeight="400">
            <text x="44" y="16" transform="rotate(-26 44 14)">TOP</text>
            <text x="33" y="37" transform="rotate(24 33 35)" fontSize="6">LEFT</text>
            <text x="56.500" y="38" transform="rotate(-27 56 36)" fontSize="6">FRONT</text>
          </g>
        </svg>
        <button className="mt-2 flex h-4 w-[46px] items-center justify-between rounded border border-[#717880] bg-[#8c929b] px-1 text-[10px] text-[#50565f]">
          WCS
          <svg viewBox="0 0 6 4" className="h-1 w-1.5"><path d="m0 0 3 3 3-3" stroke="#b5bac1" fill="none" /></svg>
        </button>
      </div>
      <svg viewBox="0 0 96 70" className="absolute bottom-0 left-1 h-[70px] w-24" aria-label="UCS icon" fontFamily="Open Sans, sans-serif" fontWeight="300" fontSize="17" fill="#dfe3e6" textAnchor="middle">
        <path d="M39.500 18v38L73 37M39.500 56 5 37" stroke="#e6e9ec" strokeWidth="1.200" fill="none" />
        <path d="m33 56 6.500-4 6.500 4-6.500 4z" fill="none" stroke="#e6e9ec" strokeWidth="1.200" />
        <text x="13" y="33">Y</text>
        <text x="50" y="17">Z</text>
        <text x="82" y="36">X</text>
      </svg>
    </div>
    <div className="w-[7px] shrink-0 border-l border-[#111] bg-gradient-to-b from-[#c5def5] via-[#9dc3ea] to-[#c5def5]" />
  </main>
);

const Cell = ({ className, children }: Kids & { className: string }) => (
  <div className={`flex shrink-0 items-center border-l-2 border-[#6c6c6c] ${className}`}>{children}</div>
);
const S = ({ name }: { name: string }) => <button aria-label={name}><Glyph name={name} /></button>;

const StatusBar = () => (
  <footer className="flex h-[27px] justify-between border-b-2 border-t border-b-black border-t-[#5d5d5d] bg-[#3a3a3a]">
    <div className="flex items-start pl-2.5">
      <button className="h-4 w-[57px] bg-gradient-to-b from-[#4f4f4f] to-[#7d7d7d] font-bold text-white [clip-path:polygon(0_0,100%_0,53px_80%,49px_100%,10px_100%,6px_80%)]">Model</button>
      <button className="-ml-0.5 h-4 w-[61px] bg-[#525252] text-[#b3b3b3] [clip-path:polygon(0_0,100%_0,57px_80%,53px_100%,10px_100%,6px_80%)]">Layout1</button>
      <button className="h-4 w-[61px] bg-[#525252] text-[#b3b3b3] [clip-path:polygon(0_0,100%_0,57px_80%,53px_100%,10px_100%,6px_80%)]">Layout2</button>
      <button aria-label="New layout" className="ml-[3px] flex h-[15px] w-[21px] items-center justify-center rounded-b-lg bg-[#525252]">
        <svg viewBox="0 0 8 8" className="h-2 w-2"><path d="M4 0v8M0 4h8" stroke="#d6d6d6" strokeWidth="1.600" /></svg>
      </button>
    </div>
    <div className="flex border-y border-r border-[#6c6c6c] bg-[#4a4a4a] text-white">
      <Cell className="w-[46px] justify-center"><button>MODEL</button></Cell>
      <Cell className="w-[62px] justify-between pl-1 pr-1"><S name="grid" /><S name="dots" /><BigTri /></Cell>
      <Cell className="w-[99px] justify-between pl-1 pr-1"><S name="ortho" /><S name="polar" /><BigTri /><S name="iso" /><BigTri /></Cell>
      <Cell className="w-[60px] justify-between pl-0.5 pr-1"><S name="angle" /><S name="osnap" /><BigTri /></Cell>
      <Cell className="w-[101px] justify-between pl-1 pr-1"><S name="anno" /><S name="anno2" /><S name="anno3" /><button className="flex items-center gap-1 font-semibold">1:1<BigTri /></button></Cell>
      <Cell className="w-[39px] justify-between pl-1 pr-1"><S name="gear" /><BigTri /></Cell>
      <Cell className="w-6 justify-center"><S name="plus" /></Cell>
      <Cell className="w-[26px] justify-center"><S name="shapes" /></Cell>
      <Cell className="w-6 justify-center"><S name="hw" /></Cell>
      <Cell className="w-[47px] justify-between pl-1 pr-0.5"><S name="clean" /><S name="burger" /></Cell>
    </div>
  </footer>
);

export default function App() {
  return (
    <div className="flex h-screen min-h-[400px] w-full flex-col overflow-hidden border-r border-black bg-[#383838] font-['Open_Sans','Noto_Sans',sans-serif] text-[11px]">
      <Header />
      <Ribbon />
      <DocTabs />
      <Viewport />
      <StatusBar />
    </div>
  );
}
